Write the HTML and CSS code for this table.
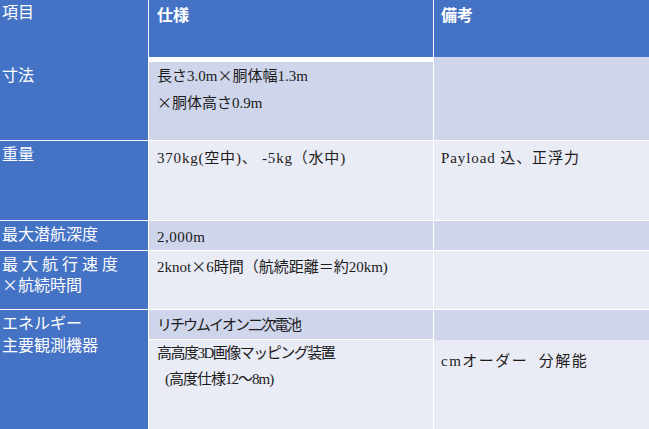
FILE: index.html
```html
<!DOCTYPE html>
<html lang="ja">
<head>
<meta charset="utf-8">
<title>仕様表</title>
<link rel="stylesheet" href="styles.css">
</head>
<body>
<div class="table">
  <div class="key key-first">
    <div class="key-line">項目</div>
    <div class="key-line key-dim">寸法</div>
  </div>
  <div class="stack">
    <div class="head">仕様</div>
    <div class="sep"></div>
    <div class="val band1 fill pad-0">長さ3.0m<span class="cj">×</span>胴体幅1.3m<br><span class="cj">×</span>胴体高さ0.9m</div>
  </div>
  <div class="stack">
    <div class="head head-r">備考</div>
    <div class="band1 fill"></div>
  </div>

  <div class="key pad-k2"><div class="key-line">重量</div></div>
  <div class="val band2 pad-4 ls-08">370kg(空中)、 -5kg（水中)</div>
  <div class="val val-r band2 pad-4 ls-09">Payload 込、正浮力</div>

  <div class="key pad-k2"><div class="key-line">最大潜航深度</div></div>
  <div class="val band1 pad-3 ls-05">2,000m</div>
  <div class="val val-r band1"></div>

  <div class="key pad-k2">
    <div class="key-line key-wide spaced">最大航行速度</div>
    <div class="key-line key-wide">×航続時間</div>
  </div>
  <div class="val band2 pad-2">2knot<span class="cj">×</span>6時間（航続距離＝約20km)</div>
  <div class="val val-r band2"></div>

  <div class="key pad-k1">
    <div class="key-line key-tall">エネルギー</div>
    <div class="key-line key-tall">主要観測機器</div>
  </div>
  <div class="stack">
    <div class="val band1 short pad-2 ls-n2">リチウムイオン二次電池</div>
    <div class="sep1"></div>
    <div class="val band2 fill pad-0"><span class="ls-n15">高高度3D画像マッピング装置</span><br><span class="indent ls-n1">(高度仕様12〜8m)</span></div>
  </div>
  <div class="stack">
    <div class="band1 short-r"></div>
    <div class="val val-r band2 fill pad-8 ls-15">cmオーダー&nbsp; 分解能</div>
  </div>
</div>
</body>
</html>
```

FILE: styles.css
```css
html, body {
  margin: 0;
  padding: 0;
  background: #ffffff;
}

.table {
  display: grid;
  grid-template-columns: 148px 284px 215px;
  grid-template-rows: 140px 79px 29px 58px 119px;
  gap: 1px;
  width: 649px;
  height: 429px;
  background: #ffffff;
  overflow: hidden;
}

.key {
  background: #4472c4;
  color: #ffffff;
  font-family: "Noto Sans CJK JP", "Noto Sans", sans-serif;
  font-size: 16px;
  padding-left: 2px;
  display: flex;
  flex-direction: column;
}

.key-first {
  padding-top: 1px;
}

.key-line {
  line-height: 20px;
  height: 20px;
  white-space: nowrap;
}

.key-dim {
  margin-top: 43px;
}

.key-wide {
  line-height: 21px;
  height: 21px;
}

.key-tall {
  line-height: 22px;
  height: 22px;
}

.spaced {
  letter-spacing: 4px;
}

.pad-k1 { padding-top: 1px; }
.pad-k2 { padding-top: 2px; }

.stack {
  display: flex;
  flex-direction: column;
}

.head {
  height: 57px;
  flex: none;
  box-sizing: border-box;
  background: #4472c4;
  color: #ffffff;
  font-family: "Noto Sans CJK JP", "Noto Sans", sans-serif;
  font-weight: bold;
  font-size: 16px;
  line-height: 20px;
  padding: 4px 0 0 8px;
}

.head-r {
  padding-left: 7px;
}

.sep {
  height: 5px;
  flex: none;
  background: #ffffff;
}

.sep1 {
  height: 1px;
  flex: none;
  background: #ffffff;
}

.fill {
  flex: 1;
}

.short {
  height: 29px;
  flex: none;
}

.short-r {
  height: 30px;
  flex: none;
}

.band1 { background: #cfd5ea; }
.band2 { background: #e9ebf5; }

.val {
  box-sizing: border-box;
  color: #1c1c1c;
  font-family: "Liberation Serif", "Noto Sans CJK JP", serif;
  font-size: 15px;
  line-height: 26px;
  padding-left: 8px;
  white-space: nowrap;
}

.val-r {
  padding-left: 7px;
}

.cj {
  font-family: "Noto Sans CJK JP", sans-serif;
}

.indent {
  padding-left: 8px;
}

.ls-05 { letter-spacing: 0.5px; }
.ls-08 { letter-spacing: 0.8px; }
.ls-09 { letter-spacing: 0.9px; }
.ls-15 { letter-spacing: 1.5px; }
.ls-n1 { letter-spacing: -1px; }
.ls-n15 { letter-spacing: -1.5px; }
.ls-n2 { letter-spacing: -2px; }

.pad-0 { padding-top: 0; }
.pad-2 { padding-top: 2px; }
.pad-3 { padding-top: 3px; }
.pad-4 { padding-top: 4px; }
.pad-8 { padding-top: 8px; }
```
